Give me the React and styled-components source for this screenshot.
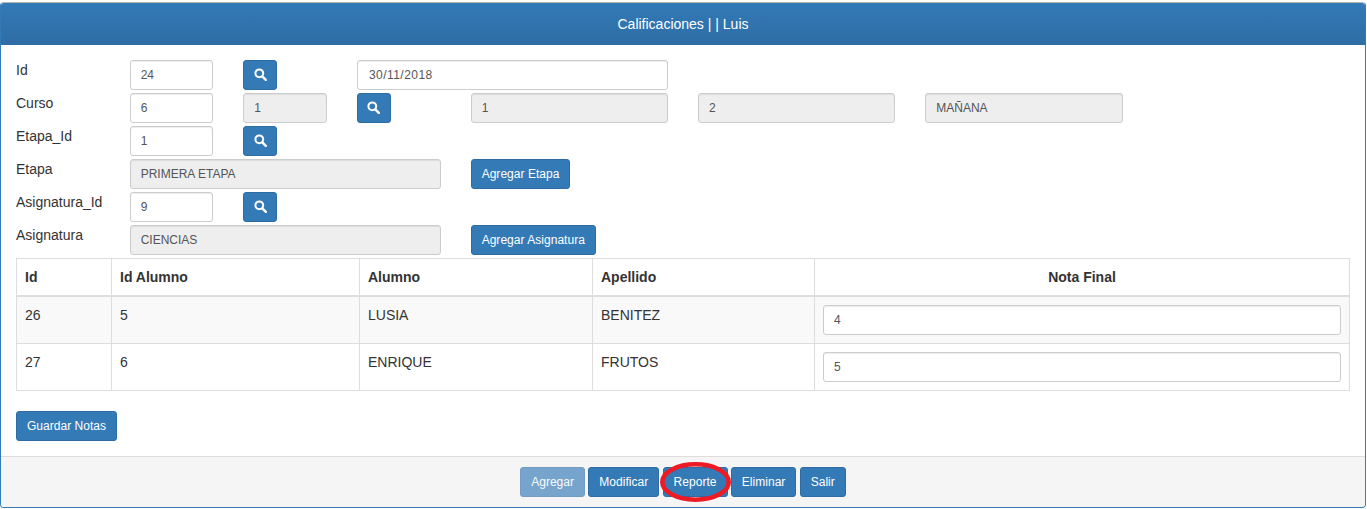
import React from "react";
import styled, { createGlobalStyle } from "styled-components";

const GlobalStyle = createGlobalStyle`
  * {
    box-sizing: border-box;
  }
  body {
    margin: 0;
    background: #fff;
    font-family: "Liberation Sans", Arial, sans-serif;
    font-size: 14px;
    line-height: 20px;
    color: #333;
  }
`;

const Panel = styled.div`
  width: 1366px;
  margin-top: 2px;
  border: 1px solid #337ab7;
  border-top-color: #b5b5b5;
  border-radius: 4px;
  background: #fff;
  overflow: hidden;
`;

const PanelHeader = styled.div`
  height: 42px;
  display: flex;
  align-items: center;
  justify-content: center;
  padding-bottom: 1px;
  background: linear-gradient(to bottom, #337ab7 0%, #2e6da4 100%);
  color: #fff;
  font-size: 14px;
`;

const PanelBody = styled.div`
  padding: 15px;
`;

const FormGrid = styled.div`
  display: grid;
  grid-template-columns: repeat(10, 83.67px);
  grid-auto-rows: 30px;
  column-gap: 30px;
  row-gap: 3px;
  margin-bottom: 3px;
`;

const Label = styled.label`
  grid-column: 1;
  line-height: 20px;
  color: #333;
`;

const Field = styled.input`
  grid-column: ${p => p.$col} / span ${p => p.$span || 1};
  width: 100%;
  height: 30px;
  padding: 5px 10px 5px ${p => (p.$spaced ? "11px" : "10px")};
  border: 1px solid #ccc;
  border-radius: 3px;
  font-family: inherit;
  font-size: 12px;
  line-height: 18px;
  letter-spacing: ${p => (p.$spaced ? "0.45px" : "normal")};
  color: #555;
  background: ${p => (p.readOnly ? "#eee" : "#fff")};
  box-shadow: inset 0 1px 1px rgba(0, 0, 0, 0.075);
  outline: none;
`;

const Button = styled.button`
  grid-column: ${p => p.$col || "auto"};
  height: 30px;
  padding: 5px 10px;
  border: 1px solid #2e6da4;
  border-radius: 3px;
  background: #337ab7;
  color: #fff;
  font-family: inherit;
  font-size: 12px;
  line-height: 18px;
  letter-spacing: 0.03px;
  white-space: nowrap;
  opacity: ${p => (p.disabled ? 0.65 : 1)};
`;

const IconButton = styled(Button)`
  width: 34px;
  padding: 0 0 1px;
  display: flex;
  align-items: center;
  justify-content: center;
`;

const ActionCell = styled.div`
  grid-column: ${p => p.$col};
  grid-column-end: span 3;
  display: flex;
`;

const Table = styled.table`
  width: 1334px;
  border-collapse: collapse;
  table-layout: fixed;
  margin-bottom: 20px;
`;

const Th = styled.th`
  width: ${p => p.$w}px;
  height: 37px;
  padding: 8px;
  border: 1px solid #ddd;
  border-bottom-width: 2px;
  text-align: ${p => (p.$center ? "center" : "left")};
  font-weight: bold;
  vertical-align: middle;
`;

const Td = styled.td`
  padding: 8px;
  border: 1px solid #ddd;
  vertical-align: top;
`;

const Row = styled.tr`
  background: ${p => (p.$odd ? "#f9f9f9" : "#fff")};
`;

const NotaInput = styled(Field)`
  display: block;
`;

const PanelFooter = styled.div`
  display: flex;
  justify-content: center;
  gap: 3.3px;
  padding: 10px 15px;
  border-top: 1px solid #ddd;
  background: #f5f5f5;
`;

const Circled = styled.div`
  position: relative;
`;

const RedEllipse = styled.svg`
  position: absolute;
  left: -3px;
  top: -5px;
  width: 71px;
  height: 40px;
  pointer-events: none;
`;

const SearchIcon = () => (
  <svg width="13" height="13" viewBox="0 0 13 13" fill="none">
    <circle cx="5.3" cy="5.3" r="3.9" stroke="#fff" strokeWidth="2" />
    <path d="M8.3 8.3 L11.8 11.8" stroke="#fff" strokeWidth="2.4" strokeLinecap="round" />
  </svg>
);

const Search = ({ col }) => (
  <IconButton $col={col} type="button">
    <SearchIcon />
  </IconButton>
);

const alumnos = [
  { id: 26, idAlumno: 5, nombre: "LUSIA", apellido: "BENITEZ", nota: "4" },
  { id: 27, idAlumno: 6, nombre: "ENRIQUE", apellido: "FRUTOS", nota: "5" }
];

const App = () => (
  <>
    <GlobalStyle />
    <Panel>
      <PanelHeader>Calificaciones | | Luis</PanelHeader>
      <PanelBody>
        <FormGrid>
          <Label>Id</Label>
          <Field $col={2} defaultValue="24" />
          <Search col={3} />
          <Field $col={4} $span={3} $spaced defaultValue="30/11/2018" />

          <Label>Curso</Label>
          <Field $col={2} defaultValue="6" />
          <Field $col={3} defaultValue="1" readOnly />
          <Search col={4} />
          <Field $col={5} $span={2} defaultValue="1" readOnly />
          <Field $col={7} $span={2} defaultValue="2" readOnly />
          <Field $col={9} $span={2} defaultValue="MAÑANA" readOnly />

          <Label>Etapa_Id</Label>
          <Field $col={2} defaultValue="1" />
          <Search col={3} />

          <Label>Etapa</Label>
          <Field $col={2} $span={3} defaultValue="PRIMERA ETAPA" readOnly />
          <ActionCell $col={5}>
            <Button type="button">Agregar Etapa</Button>
          </ActionCell>

          <Label>Asignatura_Id</Label>
          <Field $col={2} defaultValue="9" />
          <Search col={3} />

          <Label>Asignatura</Label>
          <Field $col={2} $span={3} defaultValue="CIENCIAS" readOnly />
          <ActionCell $col={5}>
            <Button type="button">Agregar Asignatura</Button>
          </ActionCell>
        </FormGrid>

        <Table>
          <thead>
            <tr>
              <Th $w={95}>Id</Th>
              <Th $w={248}>Id Alumno</Th>
              <Th $w={233}>Alumno</Th>
              <Th $w={222}>Apellido</Th>
              <Th $center>Nota Final</Th>
            </tr>
          </thead>
          <tbody>
            {alumnos.map((a, i) => (
              <Row key={a.id} $odd={i === 0}>
                <Td>{a.id}</Td>
                <Td>{a.idAlumno}</Td>
                <Td>{a.nombre}</Td>
                <Td>{a.apellido}</Td>
                <Td>
                  <NotaInput defaultValue={a.nota} />
                </Td>
              </Row>
            ))}
          </tbody>
        </Table>

        <Button type="button">Guardar Notas</Button>
      </PanelBody>
      <PanelFooter>
        <Button type="button" disabled>Agregar</Button>
        <Button type="button">Modificar</Button>
        <Circled>
          <Button type="button">Reporte</Button>
          <RedEllipse viewBox="0 0 71 40">
            <ellipse cx="35.5" cy="20" rx="33.2" ry="17.7" fill="none" stroke="#ed1c24" strokeWidth="4.6" />
          </RedEllipse>
        </Circled>
        <Button type="button">Eliminar</Button>
        <Button type="button">Salir</Button>
      </PanelFooter>
    </Panel>
  </>
);

export default App;
